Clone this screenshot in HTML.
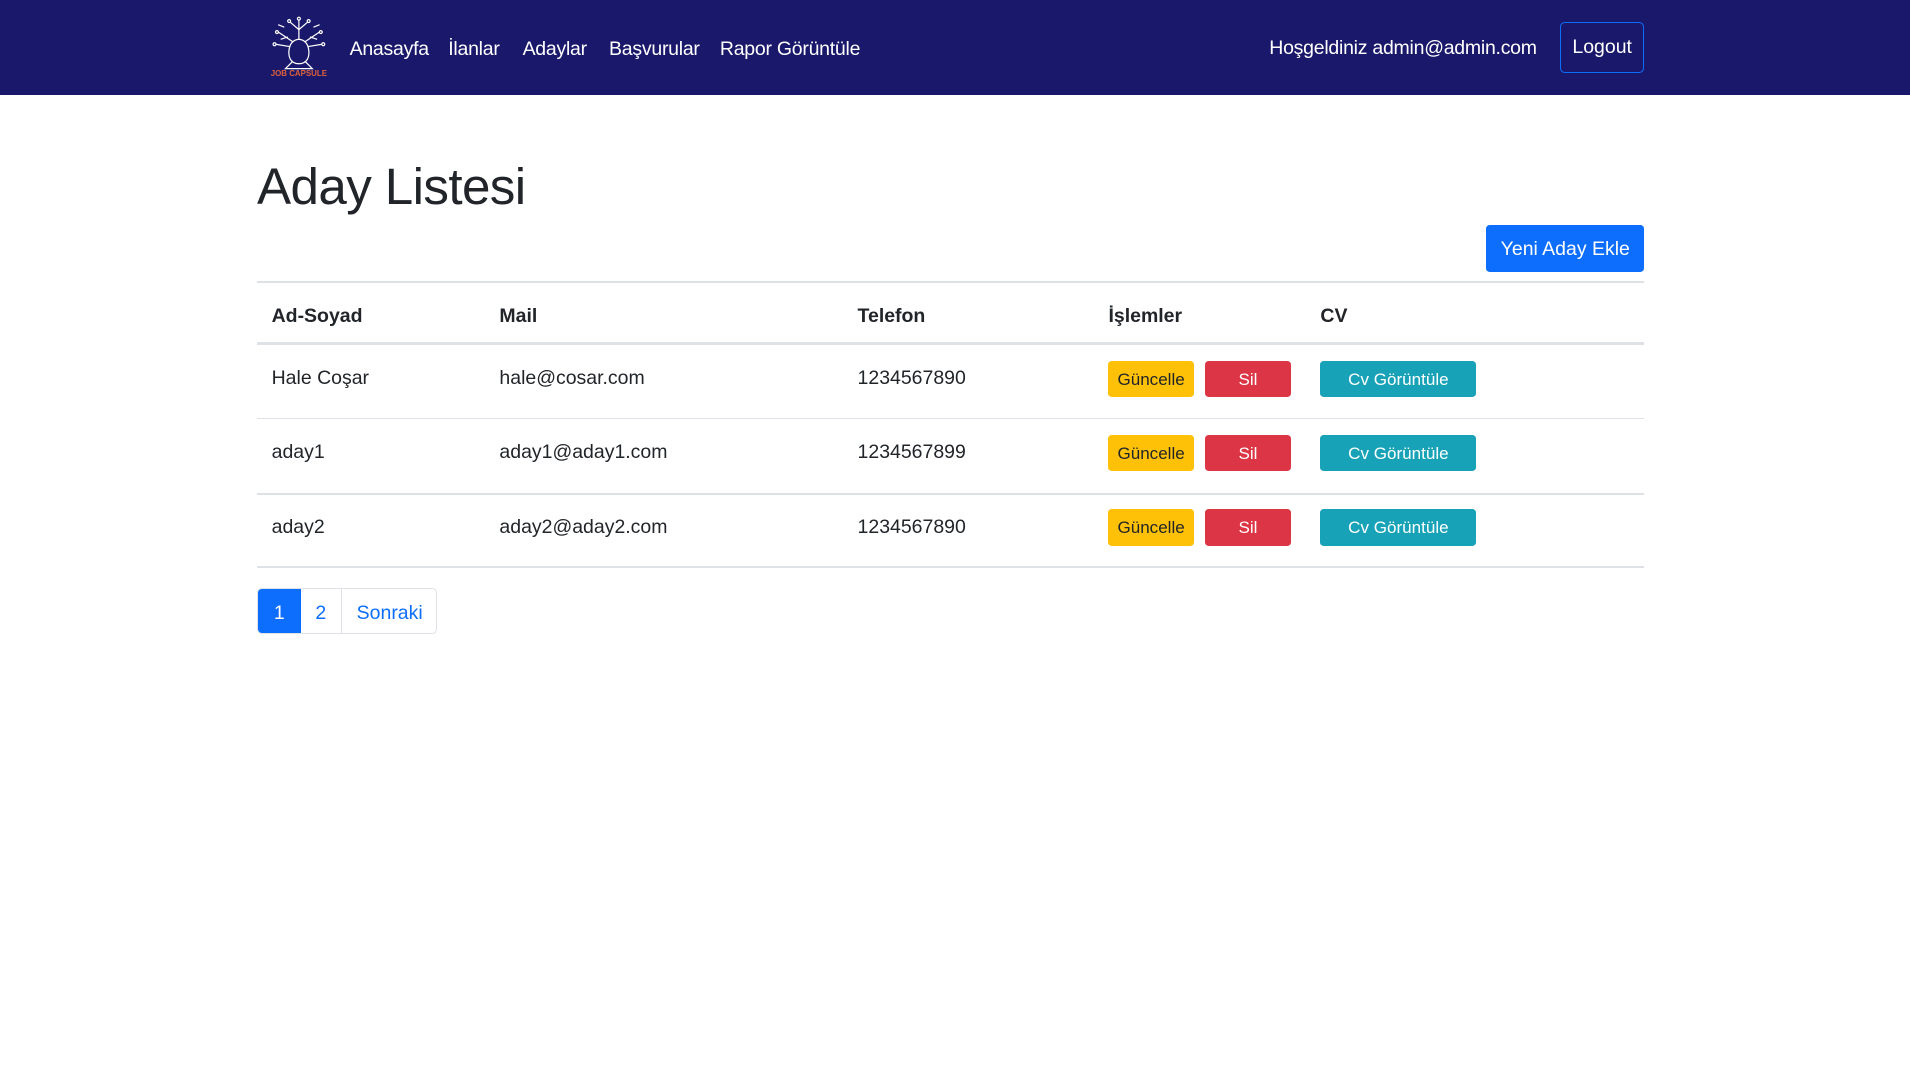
<!DOCTYPE html>
<html><head><meta charset="utf-8"><style>
html,body{margin:0;padding:0;background:#fff;}
body{zoom:1.21811;font-family:"Liberation Sans",sans-serif;color:#212529;font-size:16px;width:1568px;height:885px;overflow:hidden;position:relative}
.nav{position:absolute;left:0;top:0;width:1568px;height:78px;background:#1a186b;color:#fff}
.a{position:absolute;top:31px;font-size:16px;color:#fff;white-space:nowrap;letter-spacing:-0.2px}
.logout{position:absolute;left:1281px;top:18px;width:67px;height:40px;border:1px solid #0d6efd;border-radius:4px;color:#fff;font-size:16px;line-height:41px;text-align:center}
h1{position:absolute;left:211px;top:129px;margin:0;font-size:42px;font-weight:500;letter-spacing:-0.5px}
.btn{position:absolute;color:#fff;text-align:center;border-radius:3px;white-space:nowrap}
.line{position:absolute;left:211px;width:1139px;height:1px;background:#dee2e6}
.t{position:absolute;white-space:nowrap;font-size:16px}
.b{font-weight:bold}
</style></head><body>
<div class="nav">
<svg style="position:absolute;left:218px;top:12px" width="54" height="52" viewBox="0 0 54 52" fill="none" stroke="#fff" stroke-width="1">
<path d="M27 40 C20 40 18 34 19 28 C20 22 24 20 27 20 C30 20 34 22 35 28 C36 34 34 40 27 40Z"/>
<path d="M22 38 L16 44 L38 44 L32 38"/>
<path d="M27 20 L27 4 M27 12 L20 6 M27 12 L34 6 M22 22 L10 14 M32 22 L44 14 M20 26 L8 24 M34 26 L46 24 M15 10 L10 8 M39 10 L44 8 M18 18 L12 20 M36 18 L42 20"/>
<circle cx="27" cy="3" r="1.2"/><circle cx="19" cy="5" r="1.2"/><circle cx="35" cy="5" r="1.2"/><circle cx="9" cy="14" r="1.2"/><circle cx="45" cy="14" r="1.2"/><circle cx="7" cy="24" r="1.2"/><circle cx="47" cy="24" r="1.2"/>
<text x="27" y="50" fill="#e0603a" stroke="none" font-size="6.5" font-weight="bold" text-anchor="middle" font-family="Liberation Sans">JOB CAPSULE</text>
</svg>
<div class="a" style="left:287px">Anasayfa</div>
<div class="a" style="left:368px">İlanlar</div>
<div class="a" style="left:429px">Adaylar</div>
<div class="a" style="left:500px">Başvurular</div>
<div class="a" style="left:591px">Rapor Görüntüle</div>
<div class="a" style="left:1042px;top:30px">Hoşgeldiniz admin@admin.com</div>
<div class="logout">Logout</div>
</div>
<h1>Aday Listesi</h1>
<div class="btn" style="left:1220px;top:185px;width:130px;height:38px;line-height:40px;background:#0d6efd;font-size:16px">Yeni Aday Ekle</div>
<div class="line" style="top:231px"></div>
<div class="line" style="top:281px;height:2px"></div>
<div class="line" style="top:343px"></div>
<div class="line" style="top:405px"></div>
<div class="line" style="top:465px"></div>
<div class="t b" style="left:223px;top:250px">Ad-Soyad</div>
<div class="t b" style="left:410px;top:250px">Mail</div>
<div class="t b" style="left:704px;top:250px">Telefon</div>
<div class="t b" style="left:910px;top:250px">İşlemler</div>
<div class="t b" style="left:1084px;top:250px">CV</div>

<div class="t" style="left:223px;top:301px">Hale Coşar</div>
<div class="t" style="left:410px;top:301px">hale@cosar.com</div>
<div class="t" style="left:704px;top:301px">1234567890</div>
<div class="t" style="left:223px;top:362px">aday1</div>
<div class="t" style="left:410px;top:362px">aday1@aday1.com</div>
<div class="t" style="left:704px;top:362px">1234567899</div>
<div class="t" style="left:223px;top:424px">aday2</div>
<div class="t" style="left:410px;top:424px">aday2@aday2.com</div>
<div class="t" style="left:704px;top:424px">1234567890</div>

<div class="btn" style="left:910px;top:296px;width:70px;height:30px;line-height:32px;background:#ffc107;color:#212529;font-size:14px">Güncelle</div>
<div class="btn" style="left:989px;top:296px;width:71px;height:30px;line-height:32px;background:#dc3545;font-size:14px">Sil</div>
<div class="btn" style="left:1084px;top:296px;width:128px;height:30px;line-height:32px;background:#17a2b8;font-size:14px">Cv Görüntüle</div>
<div class="btn" style="left:910px;top:357px;width:70px;height:30px;line-height:32px;background:#ffc107;color:#212529;font-size:14px">Güncelle</div>
<div class="btn" style="left:989px;top:357px;width:71px;height:30px;line-height:32px;background:#dc3545;font-size:14px">Sil</div>
<div class="btn" style="left:1084px;top:357px;width:128px;height:30px;line-height:32px;background:#17a2b8;font-size:14px">Cv Görüntüle</div>
<div class="btn" style="left:910px;top:418px;width:70px;height:30px;line-height:32px;background:#ffc107;color:#212529;font-size:14px">Güncelle</div>
<div class="btn" style="left:989px;top:418px;width:71px;height:30px;line-height:32px;background:#dc3545;font-size:14px">Sil</div>
<div class="btn" style="left:1084px;top:418px;width:128px;height:30px;line-height:32px;background:#17a2b8;font-size:14px">Cv Görüntüle</div>

<div style="position:absolute;left:211px;top:483px;width:146px;height:36px;border:1px solid #dee2e6;border-radius:4px;overflow:hidden;font-size:16px;line-height:40px;color:#0d6efd">
<div style="position:absolute;left:0;top:0;width:35px;height:36px;background:#0d6efd;color:#fff;text-align:center">1</div>
<div style="position:absolute;left:35px;top:0;width:33px;height:36px;text-align:center;border-right:1px solid #dee2e6">2</div>
<div style="position:absolute;left:81px;top:0">Sonraki</div>
</div>
</body></html>
